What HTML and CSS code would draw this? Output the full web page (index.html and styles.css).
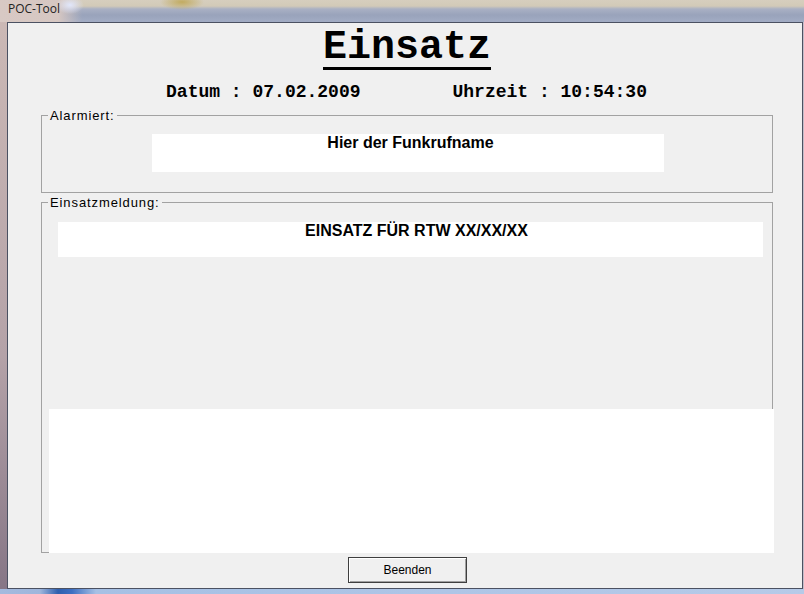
FILE: index.html
```html
<!DOCTYPE html>
<html lang="de">
<head>
    <meta charset="UTF-8">
    <meta name="viewport" content="width=device-width, initial-scale=1.0">
    <title>POC-Tool</title>
    <link rel="stylesheet" href="styles.css">
</head>
<body>

    <div class="window">
        <div class="titlebar">
            <span class="caption">POC-Tool</span>
        </div>

        <div class="client">
            <h1 class="headline"><span>Einsatz</span></h1>

            <div class="stamp">
                <span id="datum">Datum : 07.02.2009</span>
                <span id="uhrzeit">Uhrzeit : 10:54:30</span>
            </div>

            <fieldset class="group group-alarm">
                <legend>Alarmiert:</legend>
                <div class="field field-name">Hier der Funkrufname</div>
            </fieldset>

            <fieldset class="group group-message">
                <legend>Einsatzmeldung:</legend>
                <div class="field field-title">EINSATZ FÜR RTW XX/XX/XX</div>
                <div class="field field-text"></div>
            </fieldset>

            <div class="actions">
                <button id="close-button">Beenden</button>
            </div>
        </div>
    </div>

</body>
</html>
```

FILE: styles.css
```css
body {
    margin: 0;
    width: 804px;
    height: 594px;
    overflow: hidden;
    font-family: "Liberation Sans", Arial, sans-serif;
    /* taskbar strip, left frame, frame colour */
    background:
        linear-gradient(90deg, #a4bade 0, #9fb6dc 40px, #2e5fae 58px, #3d6fc2 72px, #a6c0e4 96px, #b6cae8 100%) left bottom / 100% 5px no-repeat,
        linear-gradient(#cdbab6, #b4a2a8 60%, #857585) left top / 7px 100% no-repeat,
        #c4bcc8;
}

.window {
    display: flex;
    flex-direction: column;
}

.titlebar {
    height: 22px;
    background:
        radial-gradient(ellipse 14px 9px at 70px 5px, rgba(225, 232, 255, 0.95), rgba(225, 232, 255, 0) 100%),
        radial-gradient(ellipse 22px 8px at 182px 2px, rgba(190, 165, 80, 0.85), rgba(190, 165, 80, 0) 100%),
        linear-gradient(90deg, #d8c9c4 0, #d6c7c2 58px, rgba(214, 199, 194, 0) 82px),
        linear-gradient(#d6cebe 0, #d2cab8 6px, #a9b0c4 9px, #99a3bb 15px, #a2acc4 22px);
}

.caption {
    display: block;
    padding-left: 8px;
    font-family: "Open Sans", sans-serif;
    font-size: 12px;
    line-height: 17px;
    color: #222;
}

.client {
    margin-left: 7px;
    width: 794px;
    height: 565px;
    border: 1px solid #4b5162;
    background-color: #f0f0f0;
}

.headline {
    display: flex;
    justify-content: center;
    margin: 6px 0 0;
    padding-left: 4px;
    font-family: "Courier New", "Liberation Mono", monospace;
    font-size: 40px;
    font-weight: bold;
    line-height: 38px;
    color: #000;
}

.headline span {
    border-bottom: 3px solid #000;
}

.stamp {
    display: flex;
    justify-content: center;
    gap: 92px;
    margin-top: 12px;
    padding-left: 3px;
    font-family: "Courier New", "Liberation Mono", monospace;
    font-size: 18px;
    font-weight: bold;
    line-height: 20px;
    color: #000;
}

.group {
    margin: 6px 29px 0 33px;
    padding: 0;
    border: 1px solid #a2a2a2;
    min-inline-size: 0;
}

.group legend {
    margin-left: 6px;
    padding: 0 2px;
    font-size: 13px;
    line-height: 15px;
    letter-spacing: 0.9px;
    color: #000;
}

.group-message {
    margin-top: 2px;
}

.field {
    box-sizing: border-box;
    background-color: #fff;
    text-align: center;
    font-weight: bold;
    color: #000;
}

.field-name {
    margin: 11px 0 20px 110px;
    width: 512px;
    height: 38px;
    padding: 0 0 0 5px;
    font-size: 16px;
    line-height: 18px;
}

.field-title {
    margin: 12px 0 0 16px;
    width: 705px;
    height: 35px;
    padding: 0 0 0 12px;
    font-size: 16px;
    line-height: 18px;
}

/* big text area runs over the group's right and bottom border */
.field-text {
    margin: 152px 0 -1px 7px;
    width: 725px;
    height: 144px;
}

.actions {
    display: flex;
    justify-content: center;
    margin-top: 4px;
    padding-left: 5px;
}

#close-button {
    width: 119px;
    height: 26px;
    padding: 0;
    border: 1px solid #3f3f3f;
    background-color: #f0f0f0;
    box-shadow: inset 1px 1px 0 #fff, inset -1px -1px 0 #a0a0a0;
    font-family: "Liberation Sans", Arial, sans-serif;
    font-size: 12px;
    color: #000;
}
```
